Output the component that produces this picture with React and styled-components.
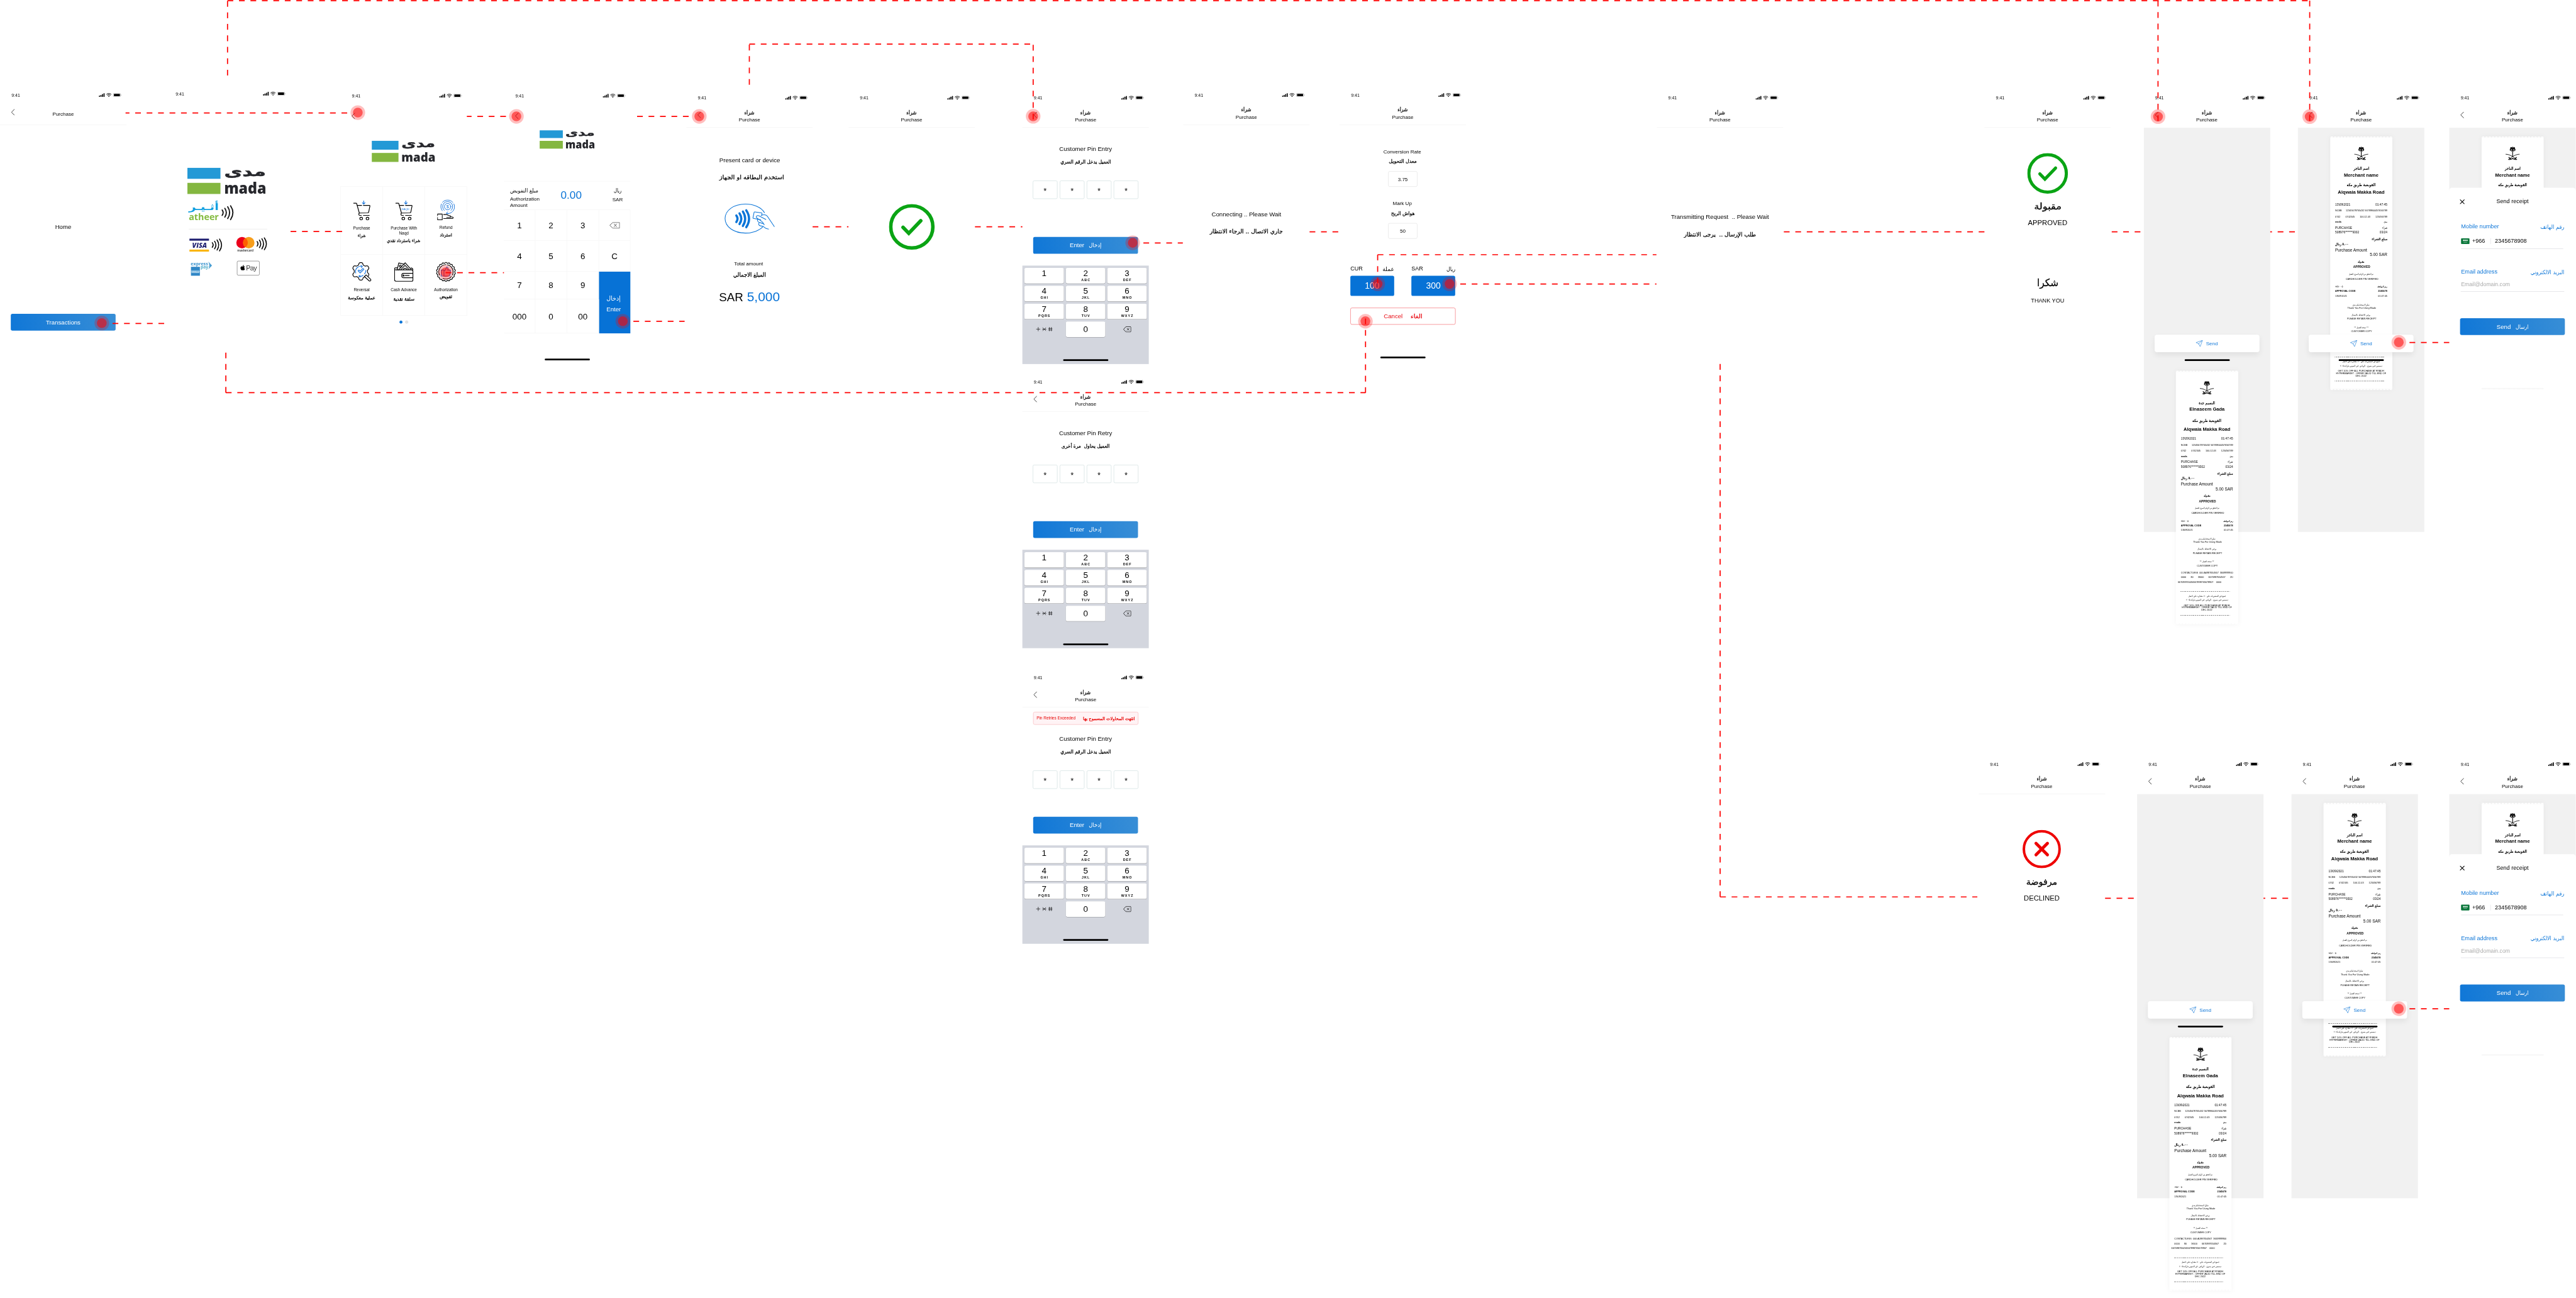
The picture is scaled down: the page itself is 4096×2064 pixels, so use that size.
import React, { useLayoutEffect, useRef, useState } from 'react';
import styled, { createGlobalStyle, css } from 'styled-components';
import { FaApple } from 'react-icons/fa';

const BOARD_SCALE = 4096 / 7642;

const GlobalStyle = createGlobalStyle`
  * {
    box-sizing: border-box;
  }
  body {
    margin: 0;
    background: #fff;
    font-family: 'Liberation Sans', Arial, sans-serif;
    color: #000;
  }
`;

const Viewport = styled.div`
  width: 4096px;
  height: 2064px;
  overflow: hidden;
`;

const Board = styled.div`
  position: relative;
  width: 7642px;
  height: 3850px;
  transform: scale(${BOARD_SCALE});
  transform-origin: 0 0;
`;

const Screen = styled.section`
  position: absolute;
  left: ${(p) => p.$x}px;
  top: ${(p) => p.$y}px;
  width: 375px;
  display: flex;
  flex-direction: column;
`;

const Flow = styled.svg`
  position: absolute;
  left: 0;
  top: 0;
  pointer-events: none;
`;

/* ---------- text ---------- */

const Line = styled.div`
  display: flex;
  flex: none;
  align-items: center;
  justify-content: ${(p) => p.$justify || 'center'};
  gap: ${(p) => p.$gap || 0}px;
  height: ${(p) => p.$h || 20}px;
  margin-top: ${(p) => p.$mt || 0}px;
  padding-left: ${(p) => p.$pl || 0}px;
  padding-right: ${(p) => p.$pr || 0}px;
  line-height: ${(p) => p.$h || 20}px;
  font-size: ${(p) => p.$size || 15}px;
  font-weight: ${(p) => (p.$bold ? 700 : 400)};
  color: ${(p) => p.$color || 'inherit'};
  white-space: pre;
`;

const ArabicBox = styled.span`
  display: block;
  flex: none;
  direction: rtl;
  width: ${(p) => p.$w}px;
  font-family: 'DejaVu Sans', sans-serif;
  font-size: ${(p) => p.$size}px;
  font-weight: ${(p) => (p.$bold ? 700 : 400)};
  -webkit-text-stroke: ${(p) => (p.$semi ? 0.5 : 0)}px currentColor;
  white-space: pre;
`;

const ArabicInk = styled.span`
  display: inline-block;
  transform-origin: 100% 50%;
`;

// Squeezes the run of Arabic text to the width it has in the design
function Arabic({ w, size = 15, bold = false, semi = false, children }) {
  const ref = useRef(null);
  const [ratio, setRatio] = useState(1);

  useLayoutEffect(() => {
    setRatio(w / ref.current.offsetWidth);
  }, [w, size, children]);

  return (
    <ArabicBox $w={w} $size={size} $bold={bold} $semi={semi} lang="ar">
      <ArabicInk ref={ref} style={{ transform: `scaleX(${ratio})` }}>
        {children}
      </ArabicInk>
    </ArabicBox>
  );
}

/* ---------- header ---------- */

const StatusBar = styled.div`
  display: flex;
  align-items: center;
  justify-content: space-between;
  height: 44px;
  padding: 0 14px 0 34px;
  font-size: 13px;
  line-height: 15px;
`;

const Nav = styled.div`
  display: grid;
  grid-template-columns: 75px 225px 75px;
  align-items: start;
  height: 67px;
  border-bottom: 1px solid ${(p) => (p.$plain ? 'transparent' : '#eeeeee')};
`;

const NavTitle = styled.div`
  grid-column: 2;
  padding-top: ${(p) => (p.$single ? 22 : 12)}px;
`;

const BackIcon = styled.svg`
  grid-column: 1;
  grid-row: 1;
  margin: ${(p) => p.$top || 19}px 0 0 33px;
`;

const BackRow = styled.div`
  height: 68px;
`;

function Status() {
  return (
    <StatusBar>
      <span>9:41</span>
      <svg width="68" height="12" viewBox="0 0 68 12">
        <rect x="0.5" y="7.5" width="3" height="4" rx="0.8" />
        <rect x="5" y="5.5" width="3" height="6" rx="0.8" />
        <rect x="9.6" y="3" width="3" height="8.5" rx="0.8" />
        <rect x="14.2" y="0.6" width="3" height="11" rx="0.8" />
        <g fill="none" stroke="#000" strokeWidth="1.8">
          <path d="M22.7 4.3a10.4 10.4 0 0 1 14.6 0" />
          <path d="M25.2 7a6.8 6.8 0 0 1 9.6 0" />
        </g>
        <path d="M27.6 9.2a3.6 3.6 0 0 1 4.8 0L30 11.7z" />
        <rect x="43" y="0.6" width="21.6" height="10.6" rx="2.8" fill="none" stroke="#000" strokeOpacity="0.38" />
        <rect x="44.8" y="2.3" width="18" height="7.2" rx="1.4" />
        <path d="M66 4v4c.9-.3 1.4-1.1 1.4-2S66.9 4.300 66 4z" fillOpacity="0.4" />
      </svg>
    </StatusBar>
  );
}

function Back({ top }) {
  return (
    <BackIcon $top={top} width="11" height="20" viewBox="0 0 11 20" fill="none" stroke="#000" strokeWidth="1.4">
      <path d="M10 1 1 10l9 9" />
    </BackIcon>
  );
}

function Header({ back, single, plain }) {
  return (
    <>
      <Status />
      <Nav $plain={plain}>
        {back && <Back />}
        <NavTitle $single={single}>
          {!single && (
            <Line>
              <Arabic w={30} size={16} semi>شراء</Arabic>
            </Line>
          )}
          <Line $mt={2}>Purchase</Line>
        </NavTitle>
      </Nav>
    </>
  );
}

/* ---------- shared parts ---------- */

const PrimaryButton = styled.div`
  display: flex;
  flex: none;
  align-items: center;
  justify-content: center;
  gap: 14px;
  width: 311px;
  height: 50px;
  margin: ${(p) => p.$mt}px 0 0 32px;
  border-radius: 5px;
  background: linear-gradient(80deg, #1077d7, #388ed6);
  color: #fff;
  font-size: 18px;
`;

const HomeBar = styled.div`
  flex: none;
  width: 134px;
  height: 5px;
  margin: ${(p) => p.$mt || 0}px 0 0 121px;
  border-radius: 3px;
  background: #000;
`;

const SendBar = styled.div`
  display: flex;
  flex: none;
  align-items: center;
  justify-content: center;
  gap: 9px;
  width: 311px;
  height: 52px;
  margin-left: 32px;
  border-radius: 7px;
  background: #fff;
  box-shadow: 0 8px 18px rgba(0, 0, 0, 0.07);
  color: #1178d8;
  font-size: 15px;
`;

const LogoSvg = styled.svg`
  display: block;
  flex: none;
  overflow: visible;
  margin: ${(p) => p.$mt}px 0 0 ${(p) => p.$ml}px;
`;

function MadaLogo({ width, mt, ml }) {
  return (
    <LogoSvg $mt={mt} $ml={ml} width={width} height={(width * 79) / 234} viewBox="0 0 234 79">
      <rect x="0" y="1" width="98" height="32.5" fill="#2399d6" />
      <rect x="0" y="45.5" width="98" height="33" fill="#84b740" />
      <text
        x="233"
        y="25"
        direction="rtl"
        textLength="124"
        lengthAdjust="spacingAndGlyphs"
        fontFamily="DejaVu Sans, sans-serif"
        fontWeight="700"
        fontSize="39"
        fill="#27282d"
        stroke="#27282d"
        strokeWidth="1"
      >
        مدى
      </text>
      <text
        x="109"
        y="78"
        textLength="125"
        lengthAdjust="spacingAndGlyphs"
        fontFamily="Open Sans, sans-serif"
        fontWeight="800"
        fontSize="46"
        fill="#27282d"
      >
        mada
      </text>
    </LogoSvg>
  );
}

function Waves({ color = '#111', ...rest }) {
  return (
    <g fill="none" stroke={color} strokeWidth="3.4" strokeLinecap="round" {...rest}>
      <path d="M2 14.5Q8 22.5 2 30.5" />
      <path d="M10 9.5Q19 22.5 10 35.5" />
      <path d="M18.5 5Q30 22.5 18.5 40" />
      <path d="M27 2Q41 22.5 27 43" />
    </g>
  );
}

/* ---------- accepted cards ---------- */

const Rule = styled.div`
  width: ${(p) => p.$w}px;
  height: 1px;
  margin: ${(p) => p.$mt}px 0 0 ${(p) => p.$ml}px;
  background: ${(p) => p.$color || '#d2d2d8'};
`;

const CardGrid = styled.div`
  display: grid;
  grid-template-columns: 139px 90px;
  grid-template-rows: 71px 46px;
  margin: 23px 0 0 75px;

  > svg {
    overflow: visible;
  }
`;

const ApplePay = styled.div`
  display: flex;
  align-items: center;
  justify-content: center;
  gap: 2px;
  width: 67px;
  height: 43px;
  margin-left: 2px;
  border: 1px solid #4a4a4a;
  border-radius: 4px;
  font-size: 20px;
  letter-spacing: -1px;
  color: #333;

  svg {
    width: 16px;
    height: 18px;
    margin-bottom: 3px;
    color: #000;
  }
`;

function WelcomeScreen() {
  return (
    <Screen $x={487} $y={256}>
      <Status />
      <MadaLogo width={234} mt={197} ml={69} />
      <LogoSvg $mt={20} $ml={73} width="136" height="60" viewBox="0 0 136 60">
        <text
          x="89"
          y="27"
          direction="rtl"
          textLength="89"
          lengthAdjust="spacingAndGlyphs"
          fontFamily="DejaVu Sans, sans-serif"
          fontWeight="700"
          fontSize="28"
          fill="#12a0e0"
        >
          أثـيـر
        </text>
        <text
          x="0"
          y="57"
          textLength="89"
          lengthAdjust="spacingAndGlyphs"
          fontFamily="Open Sans, sans-serif"
          fontWeight="700"
          fontSize="28"
          fill="#84bb40"
        >
          atheer
        </text>
        <Waves transform="translate(97 12.5)" />
      </LogoSvg>
      <Rule $w={233} $mt={23} $ml={73} $color="#e0e0e0" />
      <CardGrid>
        <svg width="100" height="48" viewBox="0 0 100 48">
          <rect x="0" y="5" width="58" height="6" fill="#1f1f70" />
          <rect x="0" y="37.5" width="58" height="6" fill="#fab50a" />
          <text
            x="8"
            y="31.5"
            textLength="44"
            lengthAdjust="spacingAndGlyphs"
            fontFamily="Open Sans, sans-serif"
            fontWeight="800"
            fontStyle="italic"
            fontSize="20"
            fill="#1f1f70"
          >
            VISA
          </text>
          <Waves color="#000" transform="translate(66 4.5) scale(0.86)" />
        </svg>
        <svg width="96" height="48" viewBox="0 0 96 48">
          <circle cx="17" cy="17" r="17" fill="#eb001b" />
          <circle cx="37" cy="17" r="17" fill="#f79e1b" />
          <path d="M27 3.200a17 17 0 0 1 0 27.600a17 17 0 0 1 0-27.600z" fill="#ff5f00" />
          <text x="3" y="43" textLength="48" lengthAdjust="spacingAndGlyphs" fontFamily="Lato, sans-serif" fontSize="9.5" fontWeight="700" fill="#333">
            mastercard
          </text>
          <Waves color="#000" transform="translate(60 1) scale(0.86)" />
        </svg>
        <svg width="70" height="46" viewBox="0 0 70 46">
          <text x="4" y="13" textLength="51" lengthAdjust="spacingAndGlyphs" fontFamily="Open Sans, sans-serif" fontWeight="700" fontSize="13" fill="#3a93cf">
            express
          </text>
          <text x="33" y="23" textLength="23" lengthAdjust="spacingAndGlyphs" fontFamily="Open Sans, sans-serif" fontWeight="700" fontSize="13" fill="#54aecb">
            pay
          </text>
          <path d="M56 2l11 12-11 11c4-8 4-15 0-23z" fill="#4a9fd4" />
          <rect x="4.5" y="17.5" width="26.5" height="26.5" fill="#2f86c6" />
          <rect x="5" y="28" width="25" height="8" fill="#a9d3ec" opacity="0.6" />
          <text x="6" y="31.5" textLength="24" fontFamily="Liberation Sans" fontWeight="700" fontSize="4" fill="#fff">
            AMERICAN
          </text>
          <text x="8" y="36" textLength="21" fontFamily="Liberation Sans" fontWeight="700" fontSize="4" fill="#fff">
            EXPRESS
          </text>
        </svg>
        <ApplePay>
          <FaApple />
          <span>Pay</span>
        </ApplePay>
      </CardGrid>
    </Screen>
  );
}

/* ---------- transaction menu ---------- */

const MenuGrid = styled.div`
  display: grid;
  grid-template-columns: repeat(3, 125px);
  grid-template-rows: 201px 181px;
  margin-top: 72px;
  border-top: 1px solid #f2f2f2;
  border-left: 1px solid #f2f2f2;
`;

const MenuCell = styled.div`
  display: flex;
  flex-direction: column;
  align-items: center;
  padding-top: ${(p) => p.$top}px;
  border-right: 1px solid #f2f2f2;
  border-bottom: 1px solid #f2f2f2;

  svg {
    flex: none;
  }
`;

const MenuLabel = styled.div`
  margin-top: ${(p) => p.$mt}px;
  font-size: 12px;
  line-height: 14.5px;
  text-align: center;
  white-space: pre-line;
`;

const Pager = styled.div`
  display: flex;
  justify-content: center;
  gap: 8px;
  margin-top: 15px;
`;

const PagerDot = styled.i`
  width: 9px;
  height: 9px;
  border-radius: 50%;
  background: ${(p) => (p.$active ? '#0772d6' : '#e6e6e6')};
  border: 1px solid ${(p) => (p.$active ? '#0772d6' : '#cfcfcf')};
`;

const BLUE = '#1a76dc';

// closed wavy outline, used for the gear and for the seal
function wavyPath(cx, cy, r, depth, teeth, squareness) {
  const steps = 180;
  const points = [];
  for (let i = 0; i < steps; i += 1) {
    const a = (i / steps) * Math.PI * 2;
    const wave = Math.tanh(Math.cos(a * teeth) * squareness);
    const rr = r + depth * wave;
    points.push(`${(cx + rr * Math.sin(a)).toFixed(2)} ${(cy - rr * Math.cos(a)).toFixed(2)}`);
  }
  return `M${points.join('L')}Z`;
}

function CartIcon({ label }) {
  return (
    <svg width="51" height="59" viewBox="0 0 51 59" fill="none" stroke="#000" strokeWidth="2.2" strokeLinecap="round" strokeLinejoin="round">
      <path d="M1 8h7.500c1 0 1.400.6 1.700 1.500L18 37" />
      <path d="M12 14.300h13M30 14.300h18c1 0 1.600.8 1.400 1.800l-3.600 18c-.3 1.600-1.200 2.300-2.800 2.400L18 37c-3 2-1.500 7 1.500 7H24M30 44h17.500" />
      <circle cx="23.5" cy="53.5" r="4" />
      <circle cx="42.3" cy="53.5" r="4" />
      <path d="M31 1v9M27 6.500l4 4 4-4" stroke={BLUE} />
      {label && (
        <text x="18.5" y="27.5" fontSize="8" fontFamily="Liberation Sans" fill={BLUE} stroke="none" textLength="23">
          {label}
        </text>
      )}
    </svg>
  );
}

function RefundIcon() {
  return (
    <svg width="53" height="61" viewBox="0 0 53 61" fill="none" stroke="#000" strokeWidth="2" strokeLinecap="round" strokeLinejoin="round">
      <g stroke={BLUE} strokeWidth="1.8">
        <circle cx="31" cy="21" r="9.5" />
        <path d="M21 32.200A15 15 0 1 1 41 32.200" />
        <path d="M15 33A20 20 0 0 1 12.500 13M15.500 8.500A20 20 0 0 1 46.500 8.500M49.500 13A20 20 0 0 1 27.500 41l3.500-4.500M27.500 41l5 1.500" />
      </g>
      <text x="31" y="26" textAnchor="middle" fontSize="14" fontFamily="Liberation Sans" fill={BLUE} stroke="none">
        $
      </text>
      <path d="M1 53V60h14V43H1v5" />
      <path d="M19 44.500h8c4 0 5 3.500 10 3.500h2v5H28M39 51l7 1c2 .5 2 3-.5 4.500H19" />
    </svg>
  );
}

function ReversalIcon() {
  return (
    <svg width="58" height="59" viewBox="0 0 58 59" fill="none" stroke="#000" strokeWidth="2.2" strokeLinecap="round" strokeLinejoin="round">
      <path d={wavyPath(26.5, 28, 22.8, 3.4, 6, 1.8)} />
      <g stroke={BLUE}>
        <path d="M11.500 33A15.500 15.500 0 0 1 31 13.500l-4-2.500M31 13.500l-3 3.500M33 40a15.500 15.500 0 0 1-12.500 2.500l3.500-2.500M20.500 42.500l4 2.500M41.500 25a15.500 15.500 0 0 1-4 10.500" />
        <path d="M18 26.500l6.500 6.500 11-11-3-2.500-8 8-3.500-3.500z" />
      </g>
      <path d="M37 43.500l5-5 13.500 13c2.500 3-1.500 7-4.500 4.500z" fill="#fff" />
    </svg>
  );
}

function WalletIcon() {
  return (
    <svg width="58" height="58" viewBox="0 0 58 58" fill="none" stroke="#000" strokeWidth="2.2" strokeLinecap="round" strokeLinejoin="round">
      <path d="M1.500 23v29c0 2.500 1.500 4.500 4.500 4.500h46c2.500 0 4-1.500 4-4V27c0-3-1.500-4.500-4-4.500H5c-5 0-5-6 0-6h5" />
      <path d="M9 23l5-21 17 4M13 23L33 1.500 51 22M20 22l12.500-13L45 22" />
      <circle cx="18.5" cy="11.5" r="3" />
      <path d="M27 22c1-5 9-6 12 0M50 17c4 0 6 1 6 6" />
      <path d="M56 33H28c-7 0-7 13 0 13h28" />
      <circle cx="28" cy="39.5" r="1.8" />
      <path d="M33 39.500h12" />
    </svg>
  );
}

function SealIcon() {
  return (
    <svg width="60" height="59" viewBox="0 0 60 59" fill="none" stroke="#000" strokeWidth="2.2" strokeLinecap="round" strokeLinejoin="round">
      <path d={wavyPath(30, 29.5, 27, 1.5, 18, 1)} />
      <path d="M11 39A21.500 21.500 0 0 1 30 8M34 8.500A21.500 21.500 0 0 1 49 39M46 43.500A21.500 21.500 0 0 1 21 49" />
      <path d="M16 24h8v18h-8zM24 27l5-4 3-8c4-.5 5 3 3 9h8c2 4-1 17-4 18H24" stroke={BLUE} />
    </svg>
  );
}

function MenuScreen() {
  return (
    <Screen $x={1010} $y={262}>
      <Status />
      <BackRow>
        <Back top={28} />
      </BackRow>
      <MadaLogo width={189} mt={43} ml={93} />
      <MenuGrid>
        <MenuCell $top={41}>
          <CartIcon />
          <MenuLabel $mt={16}>Purchase</MenuLabel>
          <Line $h={14} $mt={9}>
            <Arabic w={24} size={13} semi>شراء</Arabic>
          </Line>
        </MenuCell>
        <MenuCell $top={41}>
          <CartIcon label="NAQD" />
          <MenuLabel $mt={16}>{'Purchase With\nNaqd'}</MenuLabel>
          <Line $h={14} $mt={9}>
            <Arabic w={99} size={13} semi>شراء باسترداد نقدي</Arabic>
          </Line>
        </MenuCell>
        <MenuCell $top={38}>
          <RefundIcon />
          <MenuLabel $mt={15}>Refund</MenuLabel>
          <Line $h={14} $mt={9}>
            <Arabic w={36} size={13} semi>استرداد</Arabic>
          </Line>
        </MenuCell>
        <MenuCell $top={22}>
          <ReversalIcon />
          <MenuLabel $mt={17}>Reversal</MenuLabel>
          <Line $h={14} $mt={11}>
            <Arabic w={82} size={13} semi>عملية معكوسة</Arabic>
          </Line>
        </MenuCell>
        <MenuCell $top={23}>
          <WalletIcon />
          <MenuLabel $mt={17}>Cash Advance</MenuLabel>
          <Line $h={14} $mt={13}>
            <Arabic w={62} size={13} semi>سلفة نقدية</Arabic>
          </Line>
        </MenuCell>
        <MenuCell $top={22}>
          <SealIcon />
          <MenuLabel $mt={17}>Authorization</MenuLabel>
          <Line $h={14} $mt={7}>
            <Arabic w={37} size={13} semi>تفويض</Arabic>
          </Line>
        </MenuCell>
      </MenuGrid>
      <Pager>
        <PagerDot $active />
        <PagerDot />
      </Pager>
    </Screen>
  );
}

/* ---------- amount entry ---------- */

const AmountRow = styled.div`
  display: grid;
  grid-template-columns: 130px 139px 1fr;
  height: 86px;
  margin-top: 96px;
  border-top: 1px solid #f2f2f2;
  border-bottom: 1px solid #f2f2f2;
  line-height: 17px;
`;

const AmountLabel = styled.div`
  padding-left: 18px;
`;

const AmountUnit = styled.div`
  padding-left: 30px;
`;

const AmountValue = styled.div`
  color: #0772d6;
  font-size: 32px;
  line-height: 82px;
  text-align: center;
`;

const AmountKeys = styled.div`
  display: grid;
  grid-template-columns: 93px 94px 95px 93px;
  grid-template-rows: 91px 92px 82px 101px;
  font-size: 25px;
`;

const AmountKey = styled.div`
  display: flex;
  align-items: center;
  justify-content: center;
  border-right: 1px solid #f2f2f2;
  border-bottom: 1px solid #f2f2f2;
`;

const EnterKey = styled.div`
  grid-column: 4;
  grid-row: 3 / span 2;
  padding: 68px 6px 0 0;
  background: #0772d6;
  color: #fff;
`;

function AmountScreen() {
  return (
    <Screen $x={1495} $y={262}>
      <Status />
      <BackRow>
        <Back top={28} />
      </BackRow>
      <MadaLogo width={164} mt={12} ml={106} />
      <AmountRow>
        <AmountLabel>
          <Line $mt={17} $justify="flex-start">
            <Arabic w={84} size={16}>مبلغ التفويض</Arabic>
          </Line>
          <Line $mt={7} $h={17} $justify="flex-start">Authorization</Line>
          <Line $h={17} $justify="flex-start">Amount</Line>
        </AmountLabel>
        <AmountValue>0.00</AmountValue>
        <AmountUnit>
          <Line $mt={17}>
            <Arabic w={23} size={16}>ريال</Arabic>
          </Line>
          <Line $mt={7}>SAR</Line>
        </AmountUnit>
      </AmountRow>
      <AmountKeys>
        <AmountKey>1</AmountKey>
        <AmountKey>2</AmountKey>
        <AmountKey>3</AmountKey>
        <AmountKey>
          <svg width="31" height="19" viewBox="0 0 31 19" fill="none" stroke="#333" strokeWidth="1.4">
            <path d="M10 1h20v17H10L1 9.500zM13.500 5l8 9M21.500 5l-8 9" />
          </svg>
        </AmountKey>
        <AmountKey>4</AmountKey>
        <AmountKey>5</AmountKey>
        <AmountKey>6</AmountKey>
        <AmountKey>C</AmountKey>
        <AmountKey>7</AmountKey>
        <AmountKey>8</AmountKey>
        <AmountKey>9</AmountKey>
        <EnterKey>
          <Line>
            <Arabic w={42} size={19}>إدخال</Arabic>
          </Line>
          <Line $mt={13} $size={18}>Enter</Line>
        </EnterKey>
        <AmountKey>000</AmountKey>
        <AmountKey>0</AmountKey>
        <AmountKey>00</AmountKey>
      </AmountKeys>
      <HomeBar $mt={75} />
    </Screen>
  );
}

/* ---------- card presentation ---------- */

const Total = styled.div`
  display: flex;
  align-items: baseline;
  gap: 11px;
  margin-top: 35px;
  padding-left: 97px;
  font-size: 35px;
  line-height: 40px;

  b {
    color: #0772d6;
    font-weight: 400;
    font-size: 39px;
  }
`;

function PresentCardScreen() {
  return (
    <Screen $x={2036} $y={268}>
      <Header back />
      <Line $mt={86} $size={18} $pl={98} $justify="flex-start">Present card or device</Line>
      <Line $mt={31} $pl={98} $justify="flex-start">
        <Arabic w={192} size={17} semi>استخدم البطاقه او الجهاز</Arabic>
      </Line>
      <LogoSvg $mt={68} $ml={113} width="152" height="90" viewBox="0 0 152 90" fill="none" stroke="#0b75d8" strokeWidth="2" strokeLinecap="round" strokeLinejoin="round">
        <path d="M119 27C109 10 86 1.500 62 1.500C28 1.500 2 20 2 44.500S28 87.500 62 87.500C84 87.500 104 80 114 69" />
        <Waves color="#0b75d8" strokeWidth="5.5" transform="translate(33 17.5) scale(1.18 1.22)" />
        <path d="M108 48l-22-4c-1-.2-1.400-.8-1.200-1.800l3.200-16c.2-1.200 1-1.700 2.200-1.500l20 3c1.200.2 1.600 1 1.400 2l-.8 5" />
        <path d="M123 47l-20-10.500c-4-2.500-8.500-.5-8.500 3 0 1.500 1 2.500 2 3.500l14.500 10c4 3 5 6 7 10" />
        <path d="M109 35c7-2.500 14-2.500 18 2l21 31" />
        <path d="M99 46c-2 5 0 8 4 9.500l12 4M103 57c-3 5-.5 8 4 9l8 1.500c4 4 8 7.500 16 8" />
      </LogoSvg>
      <Line $mt={79} $pr={6}>Total amount</Line>
      <Line $mt={12}>
        <Arabic w={97} size={16} semi>المبلغ الاجمالي</Arabic>
      </Line>
      <Total>
        SAR<b>5,000</b>
      </Total>
    </Screen>
  );
}

const ResultIcon = styled.svg`
  display: block;
  flex: none;
  margin: ${(p) => p.$mt}px auto 0;
`;

function CheckIcon({ size, mt }) {
  return (
    <ResultIcon $mt={mt} width={size} height={size} viewBox="0 0 136 136" fill="none" stroke="#0aa414">
      <circle cx="68" cy="68" r="62.5" strokeWidth="10.5" />
      <path d="M42 69.500l17 17.500 35.500-37" strokeWidth="10.5" strokeLinecap="round" strokeLinejoin="miter" />
    </ResultIcon>
  );
}

function CardAcceptedScreen() {
  return (
    <Screen $x={2517} $y={268}>
      <Header />
      <CheckIcon size={136} mt={226} />
    </Screen>
  );
}

/* ---------- pin entry ---------- */

const PinRow = styled.div`
  display: flex;
  flex: none;
  gap: 8px;
  margin: ${(p) => p.$mt}px 0 0 31px;
`;

const PinBox = styled.div`
  width: 73px;
  height: 54px;
  margin-right: -1px;
  border: 1px solid #c3d6d5;
  border-radius: 4px;
  font-size: 24px;
  line-height: 60px;
  text-align: center;
`;

const Alert = styled.div`
  display: flex;
  flex: none;
  align-items: center;
  justify-content: space-between;
  width: 312px;
  height: 38px;
  margin: 13px 0 0 32px;
  padding: 0 9px;
  border: 1px solid #f7a9ad;
  border-radius: 5px;
  background: #fff3f5;
  color: #e80000;
  font-size: 12px;
`;

const Keyboard = styled.div`
  flex: none;
  height: 292px;
  margin-top: 35px;
  padding-top: 7px;
  background: #d3d6de;
`;

const KeyGrid = styled.div`
  display: grid;
  grid-template-columns: repeat(3, 117px);
  grid-auto-rows: 46px;
  gap: 7px 6px;
  padding-left: 6px;
`;

const Key = styled.div`
  display: flex;
  flex-direction: column;
  align-items: center;
  border-radius: 5px;
  font-size: 25px;
  line-height: 31px;

  ${(p) =>
    p.$flat
      ? css`
          justify-content: center;
        `
      : css`
          background: #fff;
          box-shadow: 0 1px 0 #898a8d;
        `}

  small {
    font-size: 10px;
    font-weight: 700;
    line-height: 10px;
    letter-spacing: 2px;
    text-indent: 2px;
  }
`;

const Zero = styled.span`
  line-height: 45px;
`;

const KEYS = [
  ['1', ''],
  ['2', 'ABC'],
  ['3', 'DEF'],
  ['4', 'GHI'],
  ['5', 'JKL'],
  ['6', 'MNO'],
  ['7', 'PQRS'],
  ['8', 'TUV'],
  ['9', 'WXYZ'],
];

function NumberPad() {
  return (
    <Keyboard>
      <KeyGrid>
        {KEYS.map(([digit, letters]) => (
          <Key key={digit}>
            {digit}
            <small>{letters}</small>
          </Key>
        ))}
        <Key $flat>
          <svg width="50" height="14" viewBox="0 0 50 14" fill="none" stroke="#000" strokeWidth="1.2">
            <path d="M1 6.500h12M7 .5v12M20 2l10 9.500M30 2l-10 9.500M19 6.700h12M40 .5v12M46 .5v12M37 4.500h12M37 9h12" />
          </svg>
        </Key>
        <Key>
          <Zero>0</Zero>
        </Key>
        <Key $flat>
          <svg width="24" height="18" viewBox="0 0 24 18" fill="none" stroke="#000" strokeWidth="1.4" strokeLinejoin="round">
            <path d="M8.500 1H21c1.200 0 2 .8 2 2v12c0 1.200-.8 2-2 2H8.500L1 9zM11 5.500l7 7M18 5.500l-7 7" />
          </svg>
        </Key>
      </KeyGrid>
      <HomeBar $mt={66} />
    </Keyboard>
  );
}

function PinScreen({ y, title, arabic, arabicWidth, locked }) {
  return (
    <Screen $x={3033} $y={y}>
      <Header back />
      {locked && (
        <Alert>
          <span>Pin Retries Exceeded</span>
          <Arabic w={154} size={13} semi>انتهت المحاولات المسموح بها</Arabic>
        </Alert>
      )}
      <Line $mt={locked ? 32 : 53} $size={18}>{title}</Line>
      <Line $mt={19}>
        <Arabic w={arabicWidth} size={15} semi>{arabic}</Arabic>
      </Line>
      <PinRow $mt={45}>
        <PinBox>*</PinBox>
        <PinBox>*</PinBox>
        <PinBox>*</PinBox>
        <PinBox>*</PinBox>
      </PinRow>
      <PrimaryButton $mt={locked ? 83 : 113}>
        <span>Enter</span>
        <Arabic w={37} size={17}>إدخال</Arabic>
      </PrimaryButton>
      <NumberPad />
    </Screen>
  );
}

/* ---------- waiting and conversion ---------- */

function WaitScreen({ x, y, text, arabic, arabicWidth }) {
  return (
    <Screen $x={x} $y={y}>
      <Header />
      <Line $mt={254} $size={18}>{text}</Line>
      <Line $mt={32}>
        <Arabic w={arabicWidth} size={17} semi>{arabic}</Arabic>
      </Line>
    </Screen>
  );
}

const ValueBox = styled.div`
  flex: none;
  width: 87px;
  height: 46px;
  margin: 19px 0 0 144px;
  border: 1px solid #dcdcdc;
  border-radius: 5px;
  font-size: 15px;
  line-height: 46px;
  text-align: center;
`;

const Choices = styled.div`
  display: grid;
  grid-template-columns: 130px 130px;
  column-gap: 51px;
  margin: 80px 0 0 32px;
`;

const ChoiceButton = styled.div`
  height: 60px;
  margin-top: 10px;
  border-radius: 5px;
  background: #0772d6;
  color: #fff;
  font-size: 26px;
  line-height: 58px;
  text-align: center;
`;

const CancelButton = styled.div`
  display: flex;
  align-items: center;
  justify-content: center;
  gap: 24px;
  width: 312px;
  height: 50px;
  margin: 35px 0 0 32px;
  border: 1px solid #f04a50;
  border-radius: 5px;
  color: #e80c14;
  font-size: 18px;
`;

function ConversionScreen() {
  return (
    <Screen $x={3974} $y={260}>
      <Header />
      <Line $mt={69} $pr={3}>Conversion Rate</Line>
      <Line $mt={9}>
        <Arabic w={83} size={15} semi>معدل التحويل</Arabic>
      </Line>
      <ValueBox>3.75</ValueBox>
      <Line $mt={40} $pr={3}>Mark Up</Line>
      <Line $mt={9}>
        <Arabic w={70} size={15} semi>هواش الربح</Arabic>
      </Line>
      <ValueBox>50</ValueBox>
      <Choices>
        <div>
          <Line $size={17} $justify="space-between">
            <span>CUR</span>
            <Arabic w={35} size={17}>عملة</Arabic>
          </Line>
          <ChoiceButton>100</ChoiceButton>
        </div>
        <div>
          <Line $size={17} $justify="space-between">
            <span>SAR</span>
            <Arabic w={26} size={17}>ريال</Arabic>
          </Line>
          <ChoiceButton>300</ChoiceButton>
        </div>
      </Choices>
      <CancelButton>
        <span>Cancel</span>
        <Arabic w={34} size={16} semi>الغاء</Arabic>
      </CancelButton>
      <HomeBar $mt={95} />
    </Screen>
  );
}

/* ---------- results ---------- */

function ApprovedScreen() {
  return (
    <Screen $x={5887} $y={268}>
      <Header />
      <CheckIcon size={121} mt={75} />
      <Line $mt={22} $h={30}>
        <Arabic w={82} size={27} semi>مقبولة</Arabic>
      </Line>
      <Line $mt={24} $size={21}>APPROVED</Line>
      <Line $mt={152} $h={30}>
        <Arabic w={64} size={30} semi>شكرا</Arabic>
      </Line>
      <Line $mt={29} $size={17}>THANK YOU</Line>
    </Screen>
  );
}

function DeclinedScreen() {
  return (
    <Screen $x={5869.5} $y={2245}>
      <Header />
      <ResultIcon $mt={106} width="114" height="114" viewBox="0 0 114 114" fill="none" stroke="#ee0000">
        <circle cx="57" cy="57" r="53" strokeWidth="7.5" />
        <path d="M40 40l34 34M74 40l-34 34" strokeWidth="9" strokeLinecap="round" />
      </ResultIcon>
      <Line $mt={25} $h={30}>
        <Arabic w={92} size={26} semi>مرفوضة</Arabic>
      </Line>
      <Line $mt={23} $size={21}>DECLINED</Line>
    </Screen>
  );
}

/* ---------- receipt ---------- */

const edge = css`
  content: '';
  display: block;
  height: 3px;
  background-size: 9.71px 3px;
`;

const Paper = styled.div`
  flex: none;
  display: flex;
  flex-direction: column;
  width: 184.5px;
  height: ${(p) => p.$h || 752}px;
  margin: ${(p) => p.$mt || 0}px 0 0 95.5px;
  filter: drop-shadow(0 0 7px rgba(0, 0, 0, 0.05));

  &::before {
    ${edge}
    background-image: radial-gradient(ellipse 4.3px 3px at 50% 100%, #fff 95%, transparent);
  }

  &::after {
    ${edge}
    background-image: radial-gradient(ellipse 4.3px 3px at 50% 0, #fff 95%, transparent);
  }
`;

const PaperBody = styled.div`
  flex: 1;
  padding: 27px 15px 0;
  background: #fff;
`;

const Emblem = styled.svg`
  display: block;
  margin: 0 auto;
`;

const Perforation = styled.div`
  width: 147px;
  height: 1px;
  margin: ${(p) => p.$mt}px 0 0 -2px;
  background: repeating-linear-gradient(90deg, #333 0 1.9px, transparent 1.9px 2.7px);
`;

const Offer = styled.div`
  margin: 8px 1px 0 0;
  font-size: 7px;
  line-height: 7.1px;
  text-align: center;
`;

const Overhang = styled.div`
  margin-left: -9px;
`;

const RowLine = styled(Line)`
  height: 8px;
  line-height: 8px;
`;

// One receipt line: small type on an 8px box
function Row({ size = 7, justify = 'space-between', ...rest }) {
  return <RowLine $size={size} $justify={justify} {...rest} />;
}

function ReceiptHead({ arabicName, arabicNameWidth, name, loose }) {
  return (
    <>
      <Emblem width="42" height="40" viewBox="0 0 42 40" fill="none" stroke="#111" strokeLinecap="round">
        <path d="M21 9v20" strokeWidth="2.2" />
        <path
          d="M21 8C17 3 14 5 13.500 10M21 8C15 5 14 10 15.500 12M21 8C25 3 28 5 28.500 10M21 8C27 5 28 10 26.500 12M21 8C18 0 15 2 15 5M21 8C24 0 27 2 27 5M21 8V1M21 8l-3 5M21 8l3 5"
          strokeWidth="2.3"
        />
        <path d="M1 22.500c9 .5 17 4 30 14M41 22.500c-9 .5-17 4-30 14" strokeWidth="1.7" />
        <path d="M10 32l5 6M32 32l-5 6M9 38c3 1.500 6 0 7-2M33 38c-3 1.500-6 0-7-2M18 37l3-2 3 2" strokeWidth="2.6" />
      </Emblem>
      <Row $mt={21} justify="center">
        <Arabic w={arabicNameWidth} size={12} bold>{arabicName}</Arabic>
      </Row>
      <Row $mt={11} size={14} justify="center" $bold>{name}</Row>
      <Row $mt={loose ? 25.3 : 21.4} justify="center">
        <Arabic w={85} size={12} bold>القويعية طريق مكه</Arabic>
      </Row>
    </>
  );
}

function ReceiptDetails({ loose }) {
  return (
    <>
      <Row $mt={loose ? 17.6 : 13.6} size={14} justify="center" $bold>Alqwaia Makka Road</Row>
      <Row $mt={loose ? 20.7 : 28.6} size={9}>
        <span>13\09\2021</span>
        <span>01:47:45</span>
      </Row>
      <Row $mt={10}>
        <span>NCBB</span>
        <span>12345678765432 56789844457656789</span>
      </Row>
      <Row $mt={10.7}>
        <span>0742</span>
        <span>0742345</span>
        <span>100.12.43</span>
        <span>123456789</span>
      </Row>
      <Row $mt={7.7}>
        <b>mada</b>
        <Arabic w={10} size={7} bold>مدي</Arabic>
      </Row>
      <Row $mt={9.2} size={9}>
        <span>PURCHASE</span>
        <Arabic w={15} size={9}>شراء</Arabic>
      </Row>
      <Row $mt={6.2} size={9}>
        <span>508976******9302</span>
        <span>03/24</span>
      </Row>
      <Row $mt={11.2} justify="flex-end">
        <Arabic w={46} size={11} bold>مبلغ الشراء</Arabic>
      </Row>
      <Row $mt={6.8} justify="flex-start">
        <Arabic w={40} size={11} bold>٥.٠٠ ريال</Arabic>
      </Row>
      <Row $mt={9.7} size={12}>Purchase Amount</Row>
      <Row $mt={6.2} size={12} justify="flex-end">5.00 SAR</Row>
      <Row $mt={12.3} justify="center">
        <Arabic w={19} size={9} bold>مقبولة</Arabic>
      </Row>
      <Row $mt={7.8} size={9} justify="center" $pl={3} $bold>APPROVED</Row>
      <Row $mt={12.9} justify="center">
        <Arabic w={73} size={7}>تم التحقق من الرقم السري للعميل</Arabic>
      </Row>
      <Row $mt={6.6} justify="center" $pl={5}>CARDHOLDER PIN VERIFIED</Row>
      <Row $mt={15.6}>
        <Arabic w={23} size={8}>٣٥٧٠٠٥</Arabic>
        <Arabic w={29} size={7} bold>رمز الموافقة</Arabic>
      </Row>
      <Row $mt={4.5} $bold>
        <span>APPROVAL CODE</span>
        <span>2345678</span>
      </Row>
      <Row $mt={6.1}>
        <span>13\09\2021</span>
        <span>01:47:45</span>
      </Row>
      <Row $mt={18.2} justify="center">
        <Arabic w={50} size={7}>شكرا لاستخدامكم مدي</Arabic>
      </Row>
      <Row $mt={1.9} justify="center" $pl={3}>Thank You For Using Made</Row>
      <Row $mt={11.9} justify="center">
        <Arabic w={56} size={7}>يرجي الاحتفاظ بالايصال</Arabic>
      </Row>
      <Row $mt={4} justify="center" $pl={3}>PLEASE RETAIN RECEIPT</Row>
      <Row $mt={17.5} justify="center">
        <Arabic w={42} size={7}>** نسخه العميل **</Arabic>
      </Row>
      <Row $mt={4.7} justify="center" $pl={2}>CUSTOMER COPY</Row>
      <Row $mt={11.9}>
        <span>CONTACTLESS</span>
        <span>000 A0987654567</span>
        <span>3669999900</span>
      </Row>
      <Row $mt={6.1}>
        <span>0000</span>
        <span>80</span>
        <span>3f000</span>
        <span>6670987654567</span>
        <span>2D</span>
      </Row>
      <Overhang>
        <Row $mt={6.1} justify="flex-start" $gap={8}>
          <span>667098765456567898765678907</span>
          <span>0000</span>
        </Row>
      </Overhang>
      <Perforation $mt={22.5} />
      <Row $mt={9.6} justify="center">
        <Arabic w={112} size={7}>جميع في المشتريات علي ١٠٪ مقداره علي احصل</Arabic>
      </Row>
      <Row $mt={4} justify="center">
        <Arabic w={125} size={7}>ديسمبر حتي يسري . الرياض  في السوبر ماركت٢٠١٥</Arabic>
      </Row>
      <Offer>GET 10% OFF ALL PURCHASE AT RYADH HYPERMARKET . OFFER VALID TILL END OF DEC 2022</Offer>
      <Perforation $mt={11.5} />
    </>
  );
}

const MERCHANT = { arabicName: 'اسم التاجر', arabicNameWidth: 47, name: 'Merchant name' };
const ELNASEEM = { arabicName: 'النسيم جدة', arabicNameWidth: 48, name: 'Elnaseem Gada', loose: true };

const ReceiptBody = styled.div`
  position: relative;
  flex: none;
  height: ${(p) => p.$h || 1199}px;
  padding-top: ${(p) => p.$pt || 0}px;
  background: #f1f1f1;
`;

const FloatingFooter = styled.div`
  position: absolute;
  left: 0;
  right: 0;
  top: 614px;
`;

function SendFooter() {
  return (
    <>
      <SendBar>
        <svg width="21" height="20" viewBox="0 0 21 20" fill="none" stroke="#1178d8" strokeWidth="1.1" strokeLinejoin="round">
          <path d="M20 .7L.8 7.300l7.700 3.400L13 19.300zM20 .7L8.500 10.700l.5 2" />
        </svg>
        <span>Send</span>
      </SendBar>
      <HomeBar $mt={21} />
    </>
  );
}

function ReceiptEmptyScreen({ x, y }) {
  return (
    <Screen $x={x} $y={y}>
      <Header back plain />
      <ReceiptBody $pt={614}>
        <SendFooter />
        <Paper $mt={29}>
          <PaperBody>
            <ReceiptHead {...ELNASEEM} />
            <ReceiptDetails loose />
          </PaperBody>
        </Paper>
      </ReceiptBody>
    </Screen>
  );
}

function ReceiptScreen({ x, y }) {
  return (
    <Screen $x={x} $y={y}>
      <Header back plain />
      <ReceiptBody $pt={26}>
        <Paper>
          <PaperBody>
            <ReceiptHead {...MERCHANT} />
            <ReceiptDetails />
          </PaperBody>
        </Paper>
        <FloatingFooter>
          <SendFooter />
        </FloatingFooter>
      </ReceiptBody>
    </Screen>
  );
}

/* ---------- send receipt form ---------- */

const Sheet = styled.div`
  position: relative;
  height: 524px;
  margin-top: -8px;
  padding-top: 31px;
  border-radius: 8px 8px 0 0;
  background: #fff;
`;

const SheetTitle = styled.div`
  display: grid;
  grid-template-columns: 60px 255px 60px;
  align-items: center;
  height: 20px;
  font-size: 17px;
  text-align: center;

  svg {
    margin-left: 31px;
  }
`;

const Flag = styled.i`
  display: flex;
  flex-direction: column;
  align-items: center;
  gap: 3px;
  width: 25px;
  height: 17px;
  padding-top: 4px;
  border-radius: 2px;
  background: #09763a;

  &::before {
    content: '';
    width: 14px;
    height: 4px;
    background: repeating-linear-gradient(90deg, #e4efe8 0 2px, #5ea77c 2px 3px);
  }

  &::after {
    content: '';
    width: 11px;
    height: 1px;
    background: #cfe4d7;
  }
`;

const PhoneRow = styled.div`
  display: flex;
  align-items: center;
  height: 20px;
  margin-top: 22px;
  padding-left: 35px;
  font-size: 17px;
`;

const DialCode = styled.span`
  margin-left: 8px;
  padding-right: 16px;
  border-right: 1px solid #d6d6dc;
  line-height: 17px;
`;

const PhoneNumber = styled.span`
  margin-left: 12px;
`;

const PaperTail = styled.div`
  width: 184px;
  height: 76px;
  margin-left: 96px;
  background: linear-gradient(#f4f4f4, #fff) bottom / 100% 6px no-repeat;
`;

function SendReceiptScreen({ y }) {
  return (
    <Screen $x={7266} $y={y}>
      <Header back plain />
      <ReceiptBody $h={186} $pt={26}>
        <Paper $h={160}>
          <PaperBody>
            <ReceiptHead {...MERCHANT} />
          </PaperBody>
        </Paper>
      </ReceiptBody>
      <Sheet>
        <SheetTitle>
          <svg width="15" height="15" viewBox="0 0 15 15" fill="none" stroke="#000" strokeWidth="2">
            <path d="M1 1l13 13M14 1L1 14" />
          </svg>
          <span>Send receipt</span>
        </SheetTitle>
        <Line $mt={55} $size={17} $pl={35} $pr={34} $justify="space-between" $color="#1178d8">
          <span>Mobile number</span>
          <Arabic w={71} size={17}>رقم الهاتف</Arabic>
        </Line>
        <PhoneRow>
          <Flag />
          <DialCode>+966</DialCode>
          <PhoneNumber>2345678908</PhoneNumber>
        </PhoneRow>
        <Rule $w={303} $mt={12} $ml={35} />
        <Line $mt={59} $size={17} $pl={35} $pr={34} $justify="space-between" $color="#1178d8">
          <span>Email address</span>
          <Arabic w={100} size={17}>البريد الالكتروني</Arabic>
        </Line>
        <Line $mt={16} $size={16.2} $pl={35} $justify="flex-start" $color="#ababab">Email@domain.com</Line>
        <Rule $w={307} $mt={11} $ml={34} />
        <PrimaryButton $mt={79}>
          <span>Send</span>
          <Arabic w={38} size={17}>ارسال</Arabic>
        </PrimaryButton>
      </Sheet>
      <PaperTail />
    </Screen>
  );
}

/* ---------- home ---------- */

function HomeScreen() {
  return (
    <Screen $x={0} $y={260}>
      <Header back single />
      <Line $mt={292} $size={18}>Home</Line>
      <PrimaryButton $mt={248}>Transactions</PrimaryButton>
    </Screen>
  );
}

/* ---------- flow between screens ---------- */

// [x1, y1, x2, y2]; dashes start at the first point
const LINKS = [
  [1030, 335, 372.5, 335],
  [862, 687, 1015, 687],
  [334, 959.6, 487, 959.6],
  [670, 1046, 670, 1165],
  [670, 1165, 4051, 1165],
  [4051, 945, 4051, 1165],
  [675, 224, 675, 2],
  [675, 2, 6852, 2],
  [6852, 359, 6852, 2],
  [6402, 359, 6402, 2],
  [2223, 251.5, 2223, 131],
  [2223, 131, 3065, 131],
  [3065, 354, 3065, 131],
  [1322, 809, 1495, 809],
  [1501, 345.3, 1385, 345.3],
  [2043, 345.3, 1890, 345.3],
  [1879, 953.3, 2031, 953.3],
  [2410.7, 672.7, 2517, 672.7],
  [2892.4, 672.7, 3033, 672.7],
  [3392, 721, 3509, 721],
  [3885, 687.6, 3970, 687.6],
  [4087, 755.6, 4087, 841],
  [4087, 755.6, 4914, 755.6],
  [4332, 842.5, 4914, 842.5],
  [5292, 687.6, 5887, 687.6],
  [6264.7, 687.6, 6350, 687.6],
  [6808, 687.6, 6735, 687.6],
  [7148, 1016.2, 7266, 1016.2],
  [5103, 1080, 5103, 2661],
  [5103, 2661, 5866, 2661],
  [6245, 2665, 6330, 2665],
  [6788, 2665, 6715, 2665],
  [7148, 2993, 7266, 2993],
];

const TAPS = [
  [302, 958.5],
  [1061.5, 334],
  [1322, 808],
  [1532, 345.3],
  [1847.7, 953],
  [2074.5, 345.3],
  [3065, 345],
  [3360.3, 720.4],
  [4087, 842.3],
  [4300.3, 842.3],
  [4050.7, 953],
  [6402, 346],
  [6852, 346],
  [7116.3, 1015.5],
  [7116.3, 2992.5],
];

function FlowLayer() {
  return (
    <Flow width="7642" height="3850" viewBox="0 0 7642 3850">
      {TAPS.map(([x, y]) => (
        <g key={`${x}-${y}`} fill="#ff0000">
          <circle cx={x} cy={y} r="21.7" fillOpacity="0.25" />
          <circle cx={x} cy={y} r="14.5" fillOpacity="0.54" />
        </g>
      ))}
      <g stroke="#ff0000" strokeWidth="3.2" strokeDasharray="17 17">
        {LINKS.map(([x1, y1, x2, y2]) => (
          <line key={`${x1}-${y1}-${x2}-${y2}`} x1={x1} y1={y1} x2={x2} y2={y2} />
        ))}
      </g>
    </Flow>
  );
}

export default function App() {
  return (
    <Viewport>
      <GlobalStyle />
      <Board>
        <HomeScreen />
        <WelcomeScreen />
        <MenuScreen />
        <AmountScreen />
        <PresentCardScreen />
        <CardAcceptedScreen />
        <PinScreen y={268} title="Customer Pin Entry" arabic="العميل يدخل الرقم السري" arabicWidth={150} />
        <PinScreen y={1111} title="Customer Pin Retry" arabic="العميل يحاول  مرة أخرى" arabicWidth={143} />
        <PinScreen y={1988} title="Customer Pin Entry" arabic="العميل يدخل الرقم السري" arabicWidth={150} locked />
        <WaitScreen x={3510} y={260} text="Connecting .. Please Wait" arabic="جاري الاتصال .. الرجاء الانتظار" arabicWidth={217} />
        <ConversionScreen />
        <WaitScreen x={4915} y={268} text="Transmitting Request  .. Please Wait" arabic="طلب الإرسال ..  يرجى الانتظار" arabicWidth={214} />
        <ApprovedScreen />
        <ReceiptEmptyScreen x={6359.5} y={268} />
        <ReceiptScreen x={6817} y={268} />
        <SendReceiptScreen y={268} />
        <DeclinedScreen />
        <ReceiptEmptyScreen x={6340} y={2245} />
        <ReceiptScreen x={6797.5} y={2245} />
        <SendReceiptScreen y={2245} />
        <FlowLayer />
      </Board>
    </Viewport>
  );
}
